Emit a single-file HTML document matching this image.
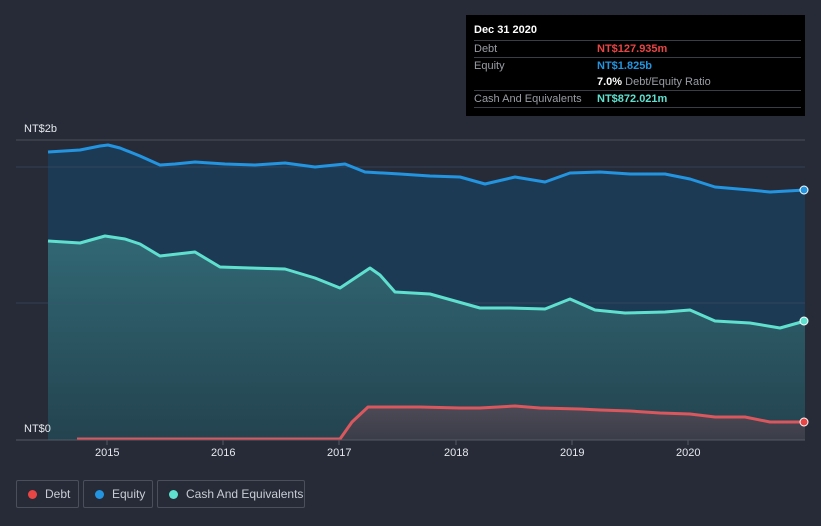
<!DOCTYPE html><html><head><style>
body{margin:0;width:821px;height:526px;background:#262b37;font-family:"Liberation Sans",sans-serif;overflow:hidden;position:relative}
.tt{position:absolute;left:466px;top:15px;width:339px;height:101px;background:#000;color:#fff;font-size:11px}
.row{position:absolute;left:8px;width:327px;border-top:1px solid #3a3d44;height:16px;line-height:16px}
.row span{position:absolute;left:123px}
.lg{position:absolute;top:480px;height:26px;border:1px solid #4a4f5b;border-radius:2px;color:#c9ccd3;font-size:12px;line-height:26px}
.lg i{position:absolute;left:11px;top:9px;width:9px;height:9px;border-radius:50%}
.ax{position:absolute;color:#e6e8ec;font-size:11px}
</style></head><body>
<svg width="821" height="526" style="position:absolute;left:0;top:0">
<defs><linearGradient id="cg" x1="0" y1="0" x2="0" y2="1"><stop offset="0" stop-color="#316874"/><stop offset="1" stop-color="#23434f"/></linearGradient>
<linearGradient id="dg" x1="0" y1="0" x2="0" y2="1"><stop offset="0" stop-color="#4d4a56"/><stop offset="1" stop-color="#3a3d48"/></linearGradient></defs>
<line x1="16" y1="140" x2="805" y2="140" stroke="#4a4f5a"/>
<path d="M48,152 L80,150 L100,146 L108,145 L120,148 L140,156 L160,165 L175,164 L195,162 L225,164 L255,165 L285,163 L315,167 L345,164 L365,172 L400,174 L430,176 L460,177 L485,184 L515,177 L545,182 L570,173 L600,172 L630,174 L665,174 L690,179 L715,187 L750,190 L770,192 L805,190 L805,440 L48,440Z" fill="#1d3a55"/>
<path d="M48,241 L80,243 L105,236 L125,239 L140,244 L160,256 L195,252 L220,267 L250,268 L285,269 L315,278 L340,288 L355,278 L370,268 L380,275 L395,292 L430,294 L455,301 L480,308 L510,308 L545,309 L570,299 L595,310 L625,313 L665,312 L690,310 L715,321 L750,323 L780,328 L805,321 L805,440 L48,440Z" fill="url(#cg)"/>
<path d="M340,439 L352,422 L368,407 L420,407 L460,408 L480,408 L515,406 L540,408 L580,409 L600,410 L630,411 L660,413 L690,414 L715,417 L745,417 L770,422 L805,422 L805,440 L340,440Z" fill="url(#dg)"/>
<line x1="16" y1="167" x2="805" y2="167" stroke="#3b5068" stroke-opacity=".6"/>
<line x1="16" y1="303" x2="805" y2="303" stroke="#3b5068" stroke-opacity=".6"/>
<path d="M48,152 L80,150 L100,146 L108,145 L120,148 L140,156 L160,165 L175,164 L195,162 L225,164 L255,165 L285,163 L315,167 L345,164 L365,172 L400,174 L430,176 L460,177 L485,184 L515,177 L545,182 L570,173 L600,172 L630,174 L665,174 L690,179 L715,187 L750,190 L770,192 L805,190" fill="none" stroke="#2394e0" stroke-width="3" stroke-linejoin="round"/>
<path d="M48,241 L80,243 L105,236 L125,239 L140,244 L160,256 L195,252 L220,267 L250,268 L285,269 L315,278 L340,288 L355,278 L370,268 L380,275 L395,292 L430,294 L455,301 L480,308 L510,308 L545,309 L570,299 L595,310 L625,313 L665,312 L690,310 L715,321 L750,323 L780,328 L805,321" fill="none" stroke="#5fe0cf" stroke-width="3" stroke-linejoin="round"/>
<path d="M77,439 L340,439 L352,422 L368,407 L420,407 L460,408 L480,408 L515,406 L540,408 L580,409 L600,410 L630,411 L660,413 L690,414 L715,417 L745,417 L770,422 L805,422" fill="none" stroke="#d9575d" stroke-width="3" stroke-linejoin="round"/>
<line x1="16" y1="440" x2="805" y2="440" stroke="#555a66"/>
<g stroke="#555a66"><line x1="107" y1="440" x2="107" y2="445"/><line x1="223" y1="440" x2="223" y2="445"/><line x1="339" y1="440" x2="339" y2="445"/><line x1="456" y1="440" x2="456" y2="445"/><line x1="572" y1="440" x2="572" y2="445"/><line x1="688" y1="440" x2="688" y2="445"/></g>
<circle cx="804" cy="190" r="4" fill="#2394e0" stroke="#fff" stroke-width="1"/>
<circle cx="804" cy="321" r="4" fill="#5fe0cf" stroke="#fff" stroke-width="1"/>
<circle cx="804" cy="422" r="4" fill="#e84545" stroke="#fff" stroke-width="1"/>
</svg>
<div class="ax" style="left:24px;top:123px">NT$2b</div>
<div class="ax" style="left:24px;top:423px">NT$0</div>
<div class="ax" style="left:95px;top:447px">2015</div>
<div class="ax" style="left:211px;top:447px">2016</div>
<div class="ax" style="left:327px;top:447px">2017</div>
<div class="ax" style="left:444px;top:447px">2018</div>
<div class="ax" style="left:560px;top:447px">2019</div>
<div class="ax" style="left:676px;top:447px">2020</div>
<div class="tt">
<div style="position:absolute;left:8px;top:9px;font-weight:bold">Dec 31 2020</div>
<div class="row" style="top:25px;color:#9a9da5">Debt<span style="color:#e84545;font-weight:bold">NT$127.935m</span></div>
<div class="row" style="top:42px;color:#9a9da5">Equity<span style="color:#2394e0;font-weight:bold">NT$1.825b</span></div>
<div class="row" style="top:59px;border:none;color:#9a9da5"><span><b style="color:#fff">7.0%</b> Debt/Equity Ratio</span></div>
<div class="row" style="top:75px;color:#9a9da5">Cash And Equivalents<span style="color:#5fe0cf;font-weight:bold">NT$872.021m</span></div>
<div class="row" style="top:92px;height:0"></div>
</div>
<div class="lg" style="left:16px;width:61px"><i style="background:#e84545"></i><span style="position:absolute;left:28px">Debt</span></div>
<div class="lg" style="left:83px;width:68px"><i style="background:#2394e0"></i><span style="position:absolute;left:28px">Equity</span></div>
<div class="lg" style="left:157px;width:146px"><i style="background:#5fe0cf"></i><span style="position:absolute;left:28px">Cash And Equivalents</span></div>
</body></html>
